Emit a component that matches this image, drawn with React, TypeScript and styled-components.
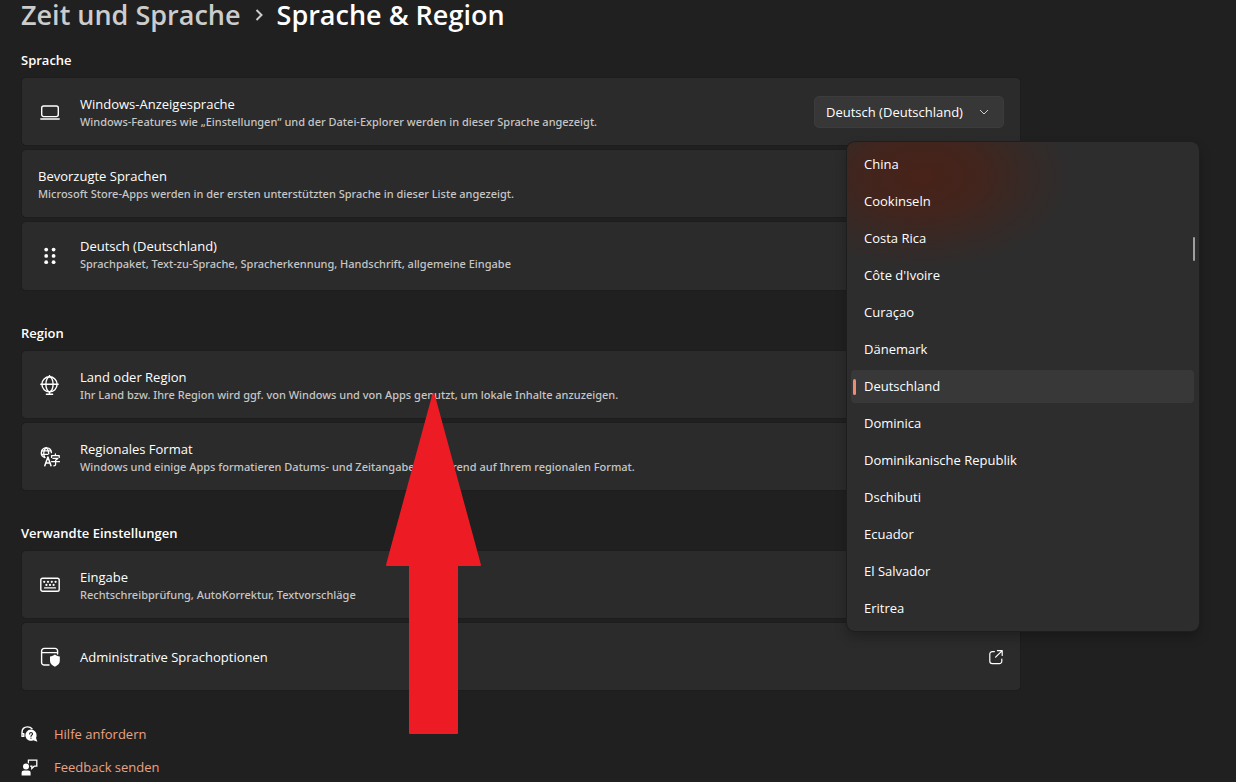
import React, { useState } from "react";
import styled, { createGlobalStyle, css } from "styled-components";

const font = `"Open Sans", "Noto Sans", sans-serif`;

const GlobalStyle = createGlobalStyle`
  * { box-sizing: border-box; }
  html { scrollbar-width: none; }
  body {
    margin: 0;
    background: #202020;
    color: #ffffff;
    font-family: ${font};
    font-size: 13px;
    line-height: 18px;
  }
  button, select { font: inherit; color: inherit; }
  a { color: inherit; text-decoration: none; }
`;

const Page = styled.main`
  position: relative;
  min-height: 100vh;
  padding: 0 21px;
`;

const Content = styled.div`
  max-width: 1000px;
`;

const Breadcrumb = styled.h1`
  display: flex;
  align-items: center;
  gap: 13px;
  margin: 0;
  font-size: 27px;
  line-height: 30px;
  font-weight: 600;
  white-space: nowrap;
`;

const Crumb = styled.a`
  color: #cccccc;
`;

const Section = styled.section<{ $first?: boolean }>`
  margin-top: ${(p) => (p.$first ? 20 : 32)}px;
`;

const SectionTitle = styled.h2`
  margin: 0 0 7px;
  font-size: 13px;
  line-height: 20px;
  font-weight: 600;
`;

const CardStack = styled.div`
  display: flex;
  flex-direction: column;
  gap: 3px;
`;

const CardText = styled.div<{ $withNote: boolean }>`
  flex: 1;
  min-width: 0;
  padding-top: ${(p) => (p.$withNote ? 2 : 0)}px;
`;

const cardStyle = css`
  display: flex;
  align-items: center;
  min-height: 69px;
  padding: 0 16px;
  background: #2b2b2b;
  border: 1px solid #1d1d1d;
  border-radius: 5px;
`;

const Card = styled.div<{ $tall?: boolean }>`
  ${cardStyle}
  position: relative;
  ${(p) =>
    p.$tall &&
    css`
      min-height: 70px;

      ${CardText} {
        padding: 0 0 2px;
      }
    `}
`;

const CardLink = styled.a`
  ${cardStyle}
`;

const IconSlot = styled.span`
  display: flex;
  flex: none;
  width: 42px;
  padding-left: 2px;
`;

const CardTitle = styled.div`
  font-size: 13px;
  line-height: 18px;
`;

const CardNote = styled.div`
  font-family: "Noto Sans", "Open Sans", sans-serif;
  font-size: 11px;
  line-height: 18px;
  font-weight: 500;
  color: #c6c6c6;
`;

const SelectBox = styled.div`
  position: relative;
  width: 190px;
`;

const Select = styled.select`
  appearance: none;
  width: 100%;
  height: 32px;
  padding: 0 36px 0 11px;
  background: #373737;
  border: 1px solid #3c3c3c;
  border-radius: 5px;
`;

const SelectArrow = styled.span`
  position: absolute;
  top: 0;
  right: 15px;
  height: 32px;
  display: flex;
  align-items: center;
  pointer-events: none;
`;

const Menu = styled.div`
  position: absolute;
  z-index: 2;
  top: -209px;
  right: -179px;
  width: 352px;
  padding: 6px 5px 6px 4px;
  background:
    radial-gradient(150px 95px at 75px 34px, rgba(88, 28, 12, 0.62), rgba(88, 28, 12, 0.48) 40%, rgba(88, 28, 12, 0.14) 78%, rgba(88, 28, 12, 0) 100%),
    #2d2d2d;
  border-radius: 8px;
  box-shadow: 0 0 0 1px #1e1e1e, 0 6px 12px rgba(0, 0, 0, 0.26);
`;

const MenuList = styled.div`
  display: flex;
  flex-direction: column;
  gap: 4px;
`;

const MenuItem = styled.button<{ $selected: boolean }>`
  position: relative;
  height: 33px;
  padding: 0 13px 2px;
  border: 0;
  border-radius: 4px;
  text-align: left;
  background: ${(p) => (p.$selected ? "#383838" : "transparent")};

  &::before {
    content: "";
    position: absolute;
    top: 9px;
    left: 2px;
    width: 3px;
    height: 16px;
    border-radius: 2px;
    background: ${(p) => (p.$selected ? "#ee8b73" : "transparent")};
  }
`;

const MenuThumb = styled.span`
  position: absolute;
  top: 95px;
  right: 4px;
  width: 2px;
  height: 24px;
  border-radius: 1px;
  background: #9f9f9f;
`;

const LinkList = styled.nav`
  display: flex;
  flex-direction: column;
  align-items: flex-start;
  gap: 1px;
  margin-top: 27px;
`;

const HelpLink = styled.a`
  display: flex;
  align-items: center;
  gap: 16px;
  height: 32px;
  color: #eba284;

  svg { color: #ffffff; }
`;

const Pointer = styled.svg`
  position: absolute;
  z-index: 3;
  top: 392px;
  left: 386px;
  pointer-events: none;
`;

const Icon = ({ size = 20, children }: { size?: number; children: React.ReactNode }) => (
  <svg
    width={size}
    height={size}
    viewBox={`0 0 ${size} ${size}`}
    fill="none"
    stroke="currentColor"
    strokeWidth="1.4"
    strokeLinecap="round"
    strokeLinejoin="round"
    aria-hidden="true"
  >
    {children}
  </svg>
);

const LaptopIcon = () => (
  <Icon>
    <rect x="1.7" y="4" width="16.6" height="10.6" rx="2" />
    <path d="M0.8 17h18.4" />
  </Icon>
);

const GripIcon = () => (
  <Icon>
    <g fill="currentColor" stroke="none">
      {[3.6, 9.9, 16.2].map((y) => (
        <React.Fragment key={y}>
          <circle cx="6.2" cy={y} r="1.9" />
          <circle cx="13.6" cy={y} r="1.9" />
        </React.Fragment>
      ))}
    </g>
  </Icon>
);

const GlobeIcon = () => (
  <Icon>
    <circle cx="9.5" cy="9.3" r="7.6" />
    <ellipse cx="9.5" cy="9.3" rx="3.6" ry="7.6" />
    <path d="M0.8 9.3h17.4M9.5 0.6v1M9.5 17v2M6.4 19.2h6.2" />
  </Icon>
);

const FormatIcon = () => (
  <Icon>
    <path d="M11.4 5.6A5 5 0 1 0 4.8 10.6" strokeWidth="1.4" />
    <path d="M6 0.8c-2.6 2.6-2.8 6.8-1.2 9.6M6.4 0.8c1.6 1.4 2.4 3.4 2.3 6M1.6 3.8h9.2M1.6 7.4h6" strokeWidth="1.3" />
    <path d="M4.8 18.8 7.9 10l3.1 8.8M6 16h3.8" strokeWidth="1.5" />
    <path d="M15.4 7v1.4M11.6 10.4V8.6h7.6v1.8M13 11.4h4.8l-2.2 1.8v4.4c0 1-.6 1.2-1.8 1.2M11.6 14.6h7.8" strokeWidth="1.3" />
  </Icon>
);

const KeyboardIcon = () => (
  <Icon>
    <rect x="0.8" y="3.2" width="18.4" height="13" rx="1.8" />
    <path d="M4.6 12.9h10.8" strokeWidth="1.4" />
    <g fill="currentColor" stroke="none">
      {[4.2, 8, 11.8, 15.6].map((x) => (
        <circle key={x} cx={x} cy="6.8" r="1.1" />
      ))}
      {[6.4, 10, 13.6].map((x) => (
        <circle key={x} cx={x} cy="9.9" r="1.1" />
      ))}
    </g>
  </Icon>
);

const AdminIcon = () => (
  <Icon>
    <path d="M9 18H4.2a2.6 2.6 0 0 1-2.6-2.6V4a2.6 2.6 0 0 1 2.6-2.6H15A2.6 2.6 0 0 1 17.6 4v3M1.6 5.6h16" strokeWidth="1.4" />
    <path
      d="M14.9 7.6c1.4 1.2 2.8 1.7 4.9 1.8v4.4c0 2.8-1.8 4.6-4.9 5.9-3.1-1.3-4.9-3.1-4.9-5.9V9.4c2.1-.1 3.5-.6 4.9-1.8z"
      fill="currentColor"
      stroke="none"
    />
  </Icon>
);

const OpenIcon = () => (
  <Icon size={16}>
    <path d="M6.4 2.6H4.2a2.4 2.4 0 0 0-2.4 2.4v7.2a2.4 2.4 0 0 0 2.4 2.4h7.2a2.4 2.4 0 0 0 2.4-2.4V10M9.4 1.6h4.8v4.8M14 1.8 7.6 8.2" strokeWidth="1.2" />
  </Icon>
);

const HelpIcon = () => (
  <Icon size={17}>
    <path d="M1 10.4V6.6C1 2.6 3.6.9 6.6.9c2 0 3.4.6 4.4 1.8M1 7.6h1.8v2.8H1z" />
    <path d="M10 3.6a5.6 5.6 0 0 1 5.6 5.6c0 1-.2 1.9-.6 2.7l1.4 3.9-4.1-1.5a5.6 5.6 0 1 1-2.3-10.7z" fill="currentColor" stroke="none" />
    <path d="M8.6 8c0-2 2.9-2 2.9-.1 0 1.2-1.5 1.2-1.5 2.4M10 12v.2" stroke="#202020" strokeWidth="1.2" />
  </Icon>
);

const FeedbackIcon = () => (
  <Icon size={17}>
    <path d="M7.4 3.8V1.2h8.4v6h-2.6l-2.4 2.2V7.2H9.6" strokeWidth="1.3" strokeLinejoin="miter" />
    <g fill="currentColor" stroke="none">
      <circle cx="5" cy="7.4" r="3" />
      <path d="M0.6 16.6v-2.8c0-1.6 1-2.4 2.4-2.4h4.2c1.4 0 2.4.8 2.4 2.4v2.8z" />
    </g>
  </Icon>
);

const countries = [
  "China",
  "Cookinseln",
  "Costa Rica",
  "Côte d'Ivoire",
  "Curaçao",
  "Dänemark",
  "Deutschland",
  "Dominica",
  "Dominikanische Republik",
  "Dschibuti",
  "Ecuador",
  "El Salvador",
  "Eritrea",
];

function CountryMenu() {
  const [country, setCountry] = useState("Deutschland");
  return (
    <Menu>
      <MenuList role="listbox" aria-label="Land oder Region">
        {countries.map((name) => (
          <MenuItem
            key={name}
            type="button"
            role="option"
            aria-selected={name === country}
            $selected={name === country}
            onClick={() => setCountry(name)}
          >
            {name}
          </MenuItem>
        ))}
      </MenuList>
      <MenuThumb />
    </Menu>
  );
}

function Label({ id, title, note }: { id?: string; title: string; note?: string }) {
  return (
    <CardText $withNote={Boolean(note)}>
      <CardTitle>{id ? <label htmlFor={id}>{title}</label> : title}</CardTitle>
      {note && <CardNote>{note}</CardNote>}
    </CardText>
  );
}

export default function App() {
  return (
    <Page>
      <GlobalStyle />
      <Content>
        <Breadcrumb>
          <Crumb href="#zeit">Zeit und Sprache</Crumb>
          <svg width="10" height="14" viewBox="0 0 10 14" fill="none" stroke="#cccccc" strokeWidth="2" aria-hidden="true">
            <path d="M2.5 2 7.5 7l-5 5" />
          </svg>
          <span>Sprache &amp; Region</span>
        </Breadcrumb>

        <Section $first>
          <SectionTitle>Sprache</SectionTitle>
          <CardStack>
            <Card>
              <IconSlot><LaptopIcon /></IconSlot>
              <Label
                id="anzeigesprache"
                title="Windows-Anzeigesprache"
                note="Windows-Features wie „Einstellungen“ und der Datei-Explorer werden in dieser Sprache angezeigt."
              />
              <SelectBox>
                <Select id="anzeigesprache" defaultValue="de">
                  <option value="de">Deutsch (Deutschland)</option>
                </Select>
                <SelectArrow>
                  <svg width="10" height="6" viewBox="0 0 10 6" fill="none" stroke="#cfcfcf" aria-hidden="true">
                    <path d="M1 1l4 4 4-4" />
                  </svg>
                </SelectArrow>
              </SelectBox>
            </Card>
            <Card>
              <Label
                title="Bevorzugte Sprachen"
                note="Microsoft Store-Apps werden in der ersten unterstützten Sprache in dieser Liste angezeigt."
              />
            </Card>
            <Card $tall>
              <IconSlot><GripIcon /></IconSlot>
              <Label
                title="Deutsch (Deutschland)"
                note="Sprachpaket, Text-zu-Sprache, Spracherkennung, Handschrift, allgemeine Eingabe"
              />
            </Card>
          </CardStack>
        </Section>

        <Section>
          <SectionTitle>Region</SectionTitle>
          <CardStack>
            <Card>
              <IconSlot><GlobeIcon /></IconSlot>
              <Label
                title="Land oder Region"
                note="Ihr Land bzw. Ihre Region wird ggf. von Windows und von Apps genutzt, um lokale Inhalte anzuzeigen."
              />
              <CountryMenu />
            </Card>
            <Card>
              <IconSlot><FormatIcon /></IconSlot>
              <Label
                title="Regionales Format"
                note="Windows und einige Apps formatieren Datums- und Zeitangaben basierend auf Ihrem regionalen Format."
              />
            </Card>
          </CardStack>
        </Section>

        <Section>
          <SectionTitle>Verwandte Einstellungen</SectionTitle>
          <CardStack>
            <CardLink href="#eingabe">
              <IconSlot><KeyboardIcon /></IconSlot>
              <Label title="Eingabe" note="Rechtschreibprüfung, AutoKorrektur, Textvorschläge" />
            </CardLink>
            <CardLink href="#admin">
              <IconSlot><AdminIcon /></IconSlot>
              <Label title="Administrative Sprachoptionen" />
              <OpenIcon />
            </CardLink>
          </CardStack>
        </Section>

        <LinkList>
          <HelpLink href="#hilfe"><HelpIcon />Hilfe anfordern</HelpLink>
          <HelpLink href="#feedback"><FeedbackIcon />Feedback senden</HelpLink>
        </LinkList>
      </Content>

      <Pointer width="95" height="342" viewBox="0 0 95 342" aria-hidden="true">
        <path
          d="M47.5 2 94 173H71v168H24V173H1z"
          fill="#ed1c24"
          stroke="#ed1c24"
          strokeWidth="2"
          strokeLinejoin="round"
        />
      </Pointer>
    </Page>
  );
}
